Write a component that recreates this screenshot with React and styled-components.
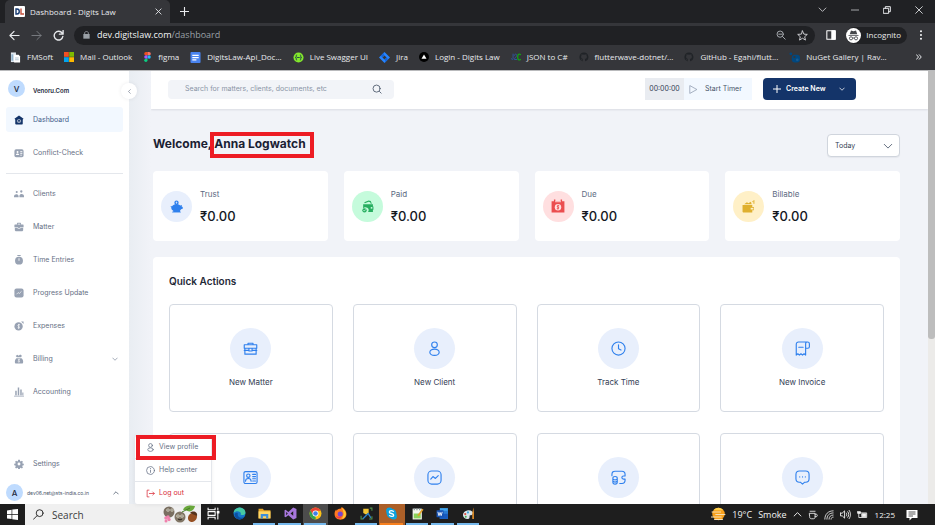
import React from "react";
import styled, { createGlobalStyle, css } from "styled-components";

const ui = `"Open Sans", "Noto Sans", sans-serif`;
const appFont = `Inter, "Liberation Sans", sans-serif`;

const Global = createGlobalStyle`
  *, *::before, *::after { box-sizing: border-box; }
  body { margin: 0; background: #fff; overflow: hidden; }
  button, input, select { font: inherit; color: inherit; border: 0; padding: 0; margin: 0; background: none; }
  a { color: inherit; text-decoration: none; }
  h1, h2, p, ul { margin: 0; padding: 0; }
  ul { list-style: none; }
  svg { display: block; flex: none; }
`;

const Desktop = styled.div`
  display: flex;
  flex-direction: column;
  height: 100vh;
  padding: 0 1px 1px 0;
`;

/* ---------- browser frame ---------- */

const BrowserFrame = styled.header`
  flex: none;
  background: #35363a;
  color: #e8eaed;
  font-family: ${ui};
  font-size: 8px;
  line-height: 12px;
  border-bottom: 1px solid #b9babc;
`;

const TabStrip = styled.div`
  display: flex;
  align-items: center;
  height: 23px;
  background: #202124;
`;

const Tab = styled.div`
  display: flex;
  align-items: center;
  gap: 5px;
  width: 165px;
  height: 23px;
  margin-left: 5px;
  padding: 0 8px 0 9px;
  border-radius: 5px 5px 0 0;
  background: #35363a;
`;

const TabTitle = styled.span`
  flex: 1;
  white-space: nowrap;
`;

const PlainButton = styled.button`
  display: grid;
  place-items: center;
  cursor: pointer;
`;

const NewTab = styled(PlainButton)`
  margin-left: 10px;
`;

const WindowControls = styled.div`
  display: flex;
  align-items: center;
  gap: 24px;
  margin-left: auto;
  padding: 0 12px 4px 0;
`;

const Toolbar = styled.div`
  display: flex;
  align-items: center;
  height: 24px;
  padding: 0 12px 0 9px;
`;

const NavButtons = styled.div`
  display: flex;
  gap: 11px;
  margin-right: 10px;
`;

const AddressBar = styled.div`
  display: flex;
  flex: 1;
  align-items: center;
  height: 19px;
  margin-right: 11px;
  padding: 0 7px 0 9px;
  border-radius: 10px;
  background: #202124;
`;

const Address = styled.a`
  flex: 1;
  margin-left: 7px;
  font-size: 9px;
  color: #9aa0a6;

  b { font-weight: 400; color: #f1f3f4; }
`;

const AddressTools = styled.div`
  display: flex;
  gap: 11px;
`;

const Incognito = styled.div`
  display: flex;
  align-items: center;
  gap: 5px;
  height: 17px;
  margin: 0 12px 0 10px;
  padding-right: 6px;
  border-radius: 9px;
  background: #202124;
`;

const Bookmarks = styled.nav`
  display: flex;
  align-items: center;
  gap: 11px;
  height: 23px;
  padding: 0 13px 3px 10px;
`;

const Bookmark = styled.a`
  display: flex;
  flex: none;
  align-items: center;
  gap: 6px;
  white-space: nowrap;
`;

const MoreBookmarks = styled(PlainButton)`
  margin-left: auto;
`;

/* ---------- application ---------- */

const Page = styled.div`
  position: relative;
  display: flex;
  flex: 1;
  min-height: 0;
  background: #f1f3f8;
  color: #667085;
  font-family: ${appFont};
  font-size: 7px;
  line-height: 12px;
`;

const Sidebar = styled.aside`
  position: relative;
  display: flex;
  flex: none;
  flex-direction: column;
  width: 129px;
  padding: 9px 6px 3px;
  background: #fff;
`;

const Org = styled.div`
  display: flex;
  align-items: flex-end;
  gap: 8px;
  margin-bottom: 10px;
  padding-left: 2px;
  color: #1d2939;
  font-size: 6px;
  font-weight: 600;
`;

const Avatar = styled.span`
  display: grid;
  flex: none;
  place-items: center;
  width: 17px;
  height: 17px;
  border-radius: 50%;
  background: #bfdbfe;
  color: #1e293b;
  font-size: 8px;
  font-weight: 500;
`;

const Collapse = styled(PlainButton)`
  position: absolute;
  top: 12px;
  right: -8px;
  z-index: 2;
  width: 16px;
  height: 16px;
  border-radius: 50%;
  background: #fff;
  box-shadow: 0 0 4px rgba(16, 24, 40, 0.08);
`;

const NavList = styled.ul`
  display: flex;
  flex-direction: column;
  gap: 8px;
`;

const NavLink = styled.a`
  display: flex;
  align-items: center;
  gap: 9px;
  height: 25px;
  padding: 0 5px 0 8px;
  border-radius: 3px;
  color: #667085;

  span { flex: 1; }

  ${({ $active }) => $active && css`
    background: #f2f8ff;
    color: #44608c;
  `}
`;

const Divider = styled.hr`
  width: 100%;
  height: 1px;
  margin: 8px 0 7px;
  border: 0;
  background: #e4e7ec;
`;

const SidebarFoot = styled.div`
  display: flex;
  flex-direction: column;
  gap: 8px;
  margin-top: auto;
`;

const Account = styled.button`
  display: flex;
  align-items: center;
  gap: 4px;
  padding-right: 4px;
  color: #475467;
  font-size: 5px;
  text-align: left;

  span:nth-child(2) { flex: 1; white-space: nowrap; }
`;

const Menu = styled.ul`
  position: absolute;
  bottom: 0;
  left: 134px;
  z-index: 3;
  width: 78px;
  border: 1px solid #e4e7ec;
  border-bottom: 0;
  border-radius: 3px;
  background: #fff;
  box-shadow: 0 1px 4px rgba(16, 24, 40, 0.06);

  li + li { border-top: 1px solid #e4e7ec; }
`;

const marker = css`
  position: relative;

  &::after {
    content: "";
    position: absolute;
    border: 4px solid #ed1c24;
    pointer-events: none;
  }
`;

const MenuItem = styled.button`
  display: flex;
  align-items: center;
  gap: 4px;
  width: 100%;
  height: 22px;
  padding-left: 11px;
  color: ${({ $danger }) => ($danger ? "#d92d3a" : "#667085")};

  ${({ $marked }) => $marked && css`
    ${marker}
    &::after { inset: -1px -5px -2px 1px; }
  `}
`;

const Gutter = styled.div`
  flex: none;
  width: 22px;
  background: linear-gradient(90deg, #e9edf2, #f1f3f8);
`;

const Workspace = styled.div`
  flex: 1;
  min-width: 0;
  overflow: hidden;
`;

const TopBar = styled.div`
  display: flex;
  align-items: center;
  height: 38px;
  padding: 0 72px 2px 17px;
  background: #fff;
  box-shadow: 0 1px 2px rgba(16, 24, 40, 0.1);
`;

const SearchBox = styled.label`
  display: flex;
  flex: 0 1 226px;
  align-items: center;
  height: 19px;
  padding: 0 12px 0 17px;
  border-radius: 4px;
  background: #f2f4f8;

  input { flex: 1; min-width: 0; outline: 0; }
  input::placeholder { color: #8a94a6; opacity: 1; }
`;

const Timer = styled.div`
  display: flex;
  height: 22px;
  margin: 0 11px 0 auto;
  color: #344054;
`;

const Clock = styled.output`
  width: 39px;
  background: #e9ecf1;
  line-height: 22px;
  text-align: center;
`;

const StartTimer = styled.button`
  display: flex;
  align-items: center;
  gap: 7px;
  width: 68px;
  padding-left: 5px;
  background: #f2f8ff;
  color: #475467;
`;

const CreateButton = styled.button`
  display: flex;
  align-items: center;
  gap: 5px;
  width: 93px;
  height: 22px;
  padding: 0 11px 0 10px;
  border-radius: 4px;
  background: #143469;
  color: #fff;
  font-weight: 600;

  svg:last-child { margin-left: auto; }
`;

const Content = styled.main`
  display: flex;
  flex-direction: column;
  padding: 25px 28px 0 2px;
`;

const Heading = styled.div`
  display: flex;
  align-items: center;
  justify-content: space-between;
  height: 23px;
  margin-bottom: 14px;
`;

const Title = styled.h1`
  color: #1a2133;
  font-size: 12px;
  font-weight: 700;
  line-height: 16px;
  padding-bottom: 3px;
`;

const MarkedName = styled.span`
  ${marker}
  display: inline-block;
  &::after { inset: -4px -8px -6px -4px; }
`;

const Period = styled.label`
  display: grid;
  align-items: center;
  width: 73px;
  height: 23px;
  border: 1px solid #d0d5dd;
  border-radius: 4px;
  background: #fff;
  color: #344054;
  box-shadow: 0 1px 1px rgba(16, 24, 40, 0.05);

  select, svg { grid-area: 1 / 1; }
  select { appearance: none; width: 100%; height: 100%; padding-left: 7px; outline: 0; }
  svg { justify-self: end; margin-right: 6px; pointer-events: none; }
`;

const Stats = styled.section`
  display: grid;
  grid-template-columns: repeat(4, 1fr);
  gap: 16px;
  margin-bottom: 16px;
`;

const StatCard = styled.article`
  display: flex;
  align-items: center;
  gap: 8px;
  height: 70px;
  padding-left: 8px;
  border-radius: 4px;
  background: #fff;
`;

const Disc = styled.span`
  display: grid;
  flex: none;
  place-items: center;
  width: ${({ $size }) => $size}px;
  height: ${({ $size }) => $size}px;
  border-radius: 50%;
  background: ${({ $tint }) => $tint};
`;

const StatLabel = styled.p`
  margin-bottom: 8px;
  color: #5d6b82;
  font-size: 8px;
`;

const StatValue = styled.p`
  color: #14181f;
  font-size: 13px;
  font-weight: 500;
  line-height: 16px;
`;

const Panel = styled.section`
  padding: 16px;
  border-radius: 4px;
  background: #fff;
`;

const PanelTitle = styled.h2`
  margin-bottom: 15px;
  color: #1f2937;
  font-size: 10px;
  font-weight: 600;
  line-height: 16px;
`;

const Actions = styled.div`
  display: grid;
  grid-template-columns: repeat(4, 1fr);
  gap: 21px 20px;
`;

const Action = styled.button`
  display: flex;
  flex-direction: column;
  align-items: center;
  gap: 7px;
  padding: 23px 0;
  border: 1px solid #d5dae2;
  border-radius: 4px;
  background: #fff;
  color: #344054;
  font-size: 8px;
  line-height: 12px;
`;

const ScrollTrack = styled.div`
  flex: none;
  width: 7px;
  background: #ecebe9;
`;

const ScrollThumb = styled.div`
  height: 62%;
  border-radius: 0 0 3px 3px;
  background: #bdbdbd;
`;

/* ---------- taskbar ---------- */

const Taskbar = styled.footer`
  display: flex;
  flex: none;
  height: 21px;
  background: #1e1e1e;
  color: #f3f3f3;
  font-family: ${ui};
  font-size: 9px;
  line-height: 12px;
`;

const Start = styled(PlainButton)`
  width: 25px;
`;

const TaskSearch = styled.label`
  display: flex;
  align-items: center;
  width: 176px;
  padding: 0 2px 0 8px;
  background: #f0f0f0;
  color: #333;
  font-size: 10px;

  input { flex: 1; min-width: 0; margin-left: 8px; outline: 0; }
  input::placeholder { color: #3c3c3c; opacity: 1; }
`;

const Apps = styled.div`
  display: grid;
  flex: none;
  grid-template-columns: repeat(11, 1fr);
  width: 280px;
`;

const taskBg = { active: "#4c4c4c", alert: "#ab5f28" };

const TaskApp = styled(PlainButton)`
  border-bottom: 2px solid transparent;
  border-image: linear-gradient(90deg, transparent 3px, ${({ $line }) => $line || "transparent"} 3px 22px, transparent 22px) 2;
  background: ${({ $state }) => taskBg[$state] || "transparent"};
`;

const Tray = styled.div`
  display: flex;
  align-items: center;
  gap: 6px;
  margin-left: auto;
  padding-right: 17px;
`;

const TrayTime = styled.time`
  margin: 0 5px 0 1px;
  font-size: 8px;
`;

/* ---------- icons ---------- */

const Line = ({ size = 9, w = size, box = "0 0 24 24", color = "currentColor", sw = 2, children }) => (
  <svg width={w} height={size} viewBox={box} fill="none" stroke={color} strokeWidth={sw} strokeLinecap="round" strokeLinejoin="round" aria-hidden="true">
    {children}
  </svg>
);

const Solid = ({ size = 10, w = size, box = "0 0 24 24", color = "#98a2b3", children }) => (
  <svg width={w} height={size} viewBox={box} fill={color} aria-hidden="true">{children}</svg>
);

const Chevron = ({ dir = "down", size = 6, sw = 3, color }) => {
  const d = { down: "M3 8l9 9 9-9", up: "M3 16l9-9 9 9", left: "M16 3l-9 9 9 9" }[dir];
  return <Line size={size} sw={sw} color={color}><path d={d} /></Line>;
};

const GitHubMark = () => (
  <Solid size={10} color="#202327">
    <path d="M12 1a11 11 0 0 0-3.5 21.4c.6.1.8-.2.8-.5v-2c-3.1.7-3.8-1.4-3.8-1.4-.5-1.3-1.2-1.6-1.2-1.6-1-.7.1-.7.1-.7 1.1.1 1.700 1.200 1.700 1.200 1 1.700 2.600 1.200 3.200.9.1-.7.4-1.200.7-1.500-2.400-.3-5-1.200-5-5.400 0-1.200.4-2.200 1.100-3-.1-.3-.5-1.400.1-2.900 0 0 .9-.3 3 1.100a10.500 10.500 0 0 1 5.500 0c2.100-1.400 3-1.100 3-1.100.6 1.500.2 2.600.1 2.900.7.8 1.100 1.800 1.100 3 0 4.200-2.600 5.100-5 5.400.4.300.7 1 .7 2v3c0 .3.2.6.8.5A11 11 0 0 0 12 1z" />
  </Solid>
);

const marks = {
  fmsoft: (
    <Solid size={11}><path d="M2 1h11v21H2z" fill="#dfe7ee" /><path d="M9 6h10l3 4v13H9z" fill="#fff" /><path d="M3 5h4v14H3z" fill="#8fb2cc" /><path d="M11 12h8v2h-8zM11 16h8v2h-8z" fill="#b6c6d2" /></Solid>
  ),
  outlook: (
    <Solid size={10}><path d="M0 0h11.500v11.500H0z" fill="#f25022" /><path d="M12.500 0H24v11.500H12.500z" fill="#7fba00" /><path d="M0 12.500h11.500V24H0z" fill="#00a4ef" /><path d="M12.500 12.500H24V24H12.500z" fill="#ffb900" /></Solid>
  ),
  figma: (
    <Solid size={10} w={9} box="0 0 22 24"><path d="M7 0h4v8H7a4 4 0 0 1 0-8z" fill="#f24e1e" /><path d="M11 0h4a4 4 0 0 1 0 8h-4z" fill="#ff7262" /><path d="M7 8h4v8H7a4 4 0 0 1 0-8z" fill="#a259ff" /><circle cx="15" cy="12" r="4" fill="#1abcfe" /><path d="M7 16h4v4a4 4 0 1 1-4-4z" fill="#0acf83" /></Solid>
  ),
  docs: (
    <Solid size={11} w={11} box="0 0 24 24"><rect x="1" width="22" height="24" rx="2" fill="#4a84f0" /><path d="M5 6h14v2.500H5zM5 11h14v2.500H5zM5 16h9v2.500H5z" fill="#fff" /></Solid>
  ),
  swagger: (
    <Solid size={11}><circle cx="12" cy="12" r="11" fill="#84e92c" /><path d="M9 6.500c-2 0-2 1-2 3 0 1.500 0 2.500-1.500 2.500C7 12 7 13 7 14.500c0 2 0 3 2 3M15 6.500c2 0 2 1 2 3 0 1.500 0 2.500 1.500 2.500C17 12 17 13 17 14.500c0 2 0 3-2 3" fill="none" stroke="#173647" strokeWidth="2" /><path d="M8.500 11h2v2h-2zM11.200 11h2v2h-2zM14 11h2v2h-2z" fill="#173647" /></Solid>
  ),
  jira: (
    <Solid size={11}><path d="M12 0l12 12-12 12L0 12z" fill="#2684ff" /><path d="M12 7.500l4.500 4.500-4.500 4.500L7.500 12z" fill="#35363a" /><path d="M12 0c-2.500 3-2.500 5 0 7.500L7.500 12 4 8zM12 24c2.500-3 2.500-5 0-7.500l4.500-4.500L20 16z" fill="#1463d6" /></Solid>
  ),
  login: (
    <Solid size={10}><circle cx="12" cy="12" r="12" fill="#000" /><path d="M12 6l6 10H6z" fill="#fff" /></Solid>
  ),
  json: (
    <Line size={10} box="0 0 24 24" sw={2.400}><path d="M5 5v11c0 3-4 3-4 0" stroke="#31549a" /><path d="M8 8c0-4 6-4 6 0 0 3-6 6-6 10h6" stroke="#31549a" /><path d="M23 6c-5-3-7 1-7 6s2 9 7 6" stroke="#12a412" strokeWidth="3" /></Line>
  ),
  github: <GitHubMark />,
  nuget: (
    <Solid size={11}><circle cx="4" cy="4" r="3" fill="#004880" /><rect x="6" y="6" width="18" height="17" rx="7" fill="#004880" /><circle cx="12" cy="11" r="2.500" fill="#35363a" /><circle cx="18" cy="17" r="3" fill="#17598f" /></Solid>
  ),
};

const navIcons = {
  home: (
    <Solid size={10} color="#143469"><path d="M12 1l11 8-2 2v10c0 1-1 2-2 2H5c-1 0-2-1-2-2V11L1 9z" /><rect x="8" y="11" width="8" height="7" rx="3" fill="none" stroke="#fff" strokeWidth="1.500" /><circle cx="12" cy="15" r="1.200" fill="#fff" /></Solid>
  ),
  idcard: (
    <Solid size={10}><rect x="1" y="3" width="22" height="19" rx="4" /><circle cx="8.500" cy="9.500" r="2.300" fill="#fff" /><path d="M4.500 17c0-5 8-5 8 0zM15 8h5v2h-5zM15 12h5v2h-5zM15 16h4v2h-4z" fill="#fff" /></Solid>
  ),
  people: (
    <Solid size={10}><circle cx="6.500" cy="7" r="2.500" /><circle cx="17.500" cy="6" r="2.800" /><path d="M0 18c0-7 10-7 11-1.500V20H0zM13 20v-4c1-6 11-5 11 1v3z" /></Solid>
  ),
  briefcase: (
    <Solid size={10}><path d="M7 6V4.500C7 3 8 2 9.500 2h5C16 2 17 3 17 4.500V6h4c1.500 0 2 1 2 2v4.500H1V8c0-1 .5-2 2-2zm2 0h6V4H9z" fillRule="evenodd" /><path d="M2 13.500h7V16h6v-2.500h7V20c0 1-1 2-2 2H4c-1 0-2-1-2-2z" /><path d="M10 12h4v3h-4z" /></Solid>
  ),
  stopwatch: (
    <Solid size={10}><path d="M8 0h8v2.500H8z" /><path d="M12 4a9.500 9.500 0 1 1 0 19 9.500 9.500 0 0 1 0-19z" /><path d="M11 8h2v6h-2z" fill="#fff" /></Solid>
  ),
  progress: (
    <Solid size={10}><rect x="1" y="1" width="22" height="22" rx="5" /><path d="M6 15l4-4 3 2 5-5" fill="none" stroke="#fff" strokeWidth="1.600" /></Solid>
  ),
  expenses: (
    <Solid size={10}><circle cx="11" cy="13" r="10" /><path d="M17 1h6v6z" /><path d="M14 9c-4-2-6 2-3 4s2 5-2 3M11.500 7v12" fill="none" stroke="#fff" strokeWidth="1.800" /></Solid>
  ),
  billing: (
    <Solid size={10}><path d="M4 5l4-3 3 2 4-3 4 3-2 4H7z" /><path d="M6 10h12c4 2 6 13 1 13H5c-5 0-3-11 1-13z" /><path d="M14 13c-4-1-5 1-2 3s0 4-3 2M12 11.500v9" fill="none" stroke="#fff" strokeWidth="1.400" /></Solid>
  ),
  bars: (
    <Solid size={10}><path d="M0 21h24v2H0zM3 9h3.500v11H3zM9 1h3.500v19H9zM15 6h3.500v14H15zM20 13h2.500v7H20z" /></Solid>
  ),
  gear: (
    <Solid size={10}><path d="M10 2h4l.6 3 1.700.7 2.600-1.600 2.500 2.600-1.600 2.600.7 1.700 3 .6v3.500l-3 .7-.7 1.700 1.600 2.600-2.500 2.500-2.600-1.600-1.700.7-.6 2.900h-4l-.6-2.900-1.700-.7-2.600 1.600-2.500-2.500 1.600-2.600-.7-1.700-3-.7v-3.500l3-.6.7-1.700-1.600-2.600 2.500-2.600 2.600 1.600L9.400 5zm2 6.500a3.500 3.500 0 1 0 0 7 3.500 3.500 0 0 0 0-7z" fillRule="evenodd" /></Solid>
  ),
};

const UserLine = ({ size, color, sw = 1.700 }) => (
  <Line size={size} color={color} sw={sw}><circle cx="12" cy="6.500" r="5" /><ellipse cx="12" cy="17.700" rx="7.300" ry="4.700" /></Line>
);

const statIcons = {
  trust: (
    <Solid size={13} color="#2f80ed"><path d="M5 10c3-3 11-3 14 0l3-1-.5 3 2 1v3l-3 1-2 3v2H6v-2c-3-2-4-4-3.500-6L1 12l1-1 1.500 1z" /><path d="M4 21.500h16V23H4z" /><circle cx="12" cy="5" r="4" /><path d="M12 3v4M10.500 4.500h3" stroke="#e8effc" strokeWidth="1.200" /></Solid>
  ),
  paid: (
    <Solid size={13} color="#27ae60"><path d="M6 4l8-3 4 1 2 5h-2l-1-3-3-1-7 3z" /><path d="M4 8h18v4h1v6h-1v4h-9a5 5 0 0 0-9-6z" /><path d="M18 13h3v3h-3z" fill="#c5fbdc" /><circle cx="6.500" cy="19" r="4" /><path d="M4.500 19l1.500 1.500 2.500-3" fill="none" stroke="#c5fbdc" strokeWidth="1.500" /></Solid>
  ),
  due: (
    <Solid size={14} color="#eb4d4f"><path d="M1 4h4V1h2.500v3h9V1H19v3h4v19H1z" /><path d="M7 4h10v1.500H7z" fill="#ffdfe0" /><circle cx="12" cy="14" r="5.500" fill="#ffdfe0" /><path d="M14 11.500c-4-1-4 2-2 2.500s2 3-2 2.500M12 10v8" fill="none" stroke="#eb4d4f" strokeWidth="1.600" /></Solid>
  ),
  billable: (
    <Solid size={13} color="#dfb02f"><path d="M2 9h17v4h3v6h-3v4H3c-1 0-2-1-2-2V10c0-1 0-1 1-1z" /><path d="M4 8l5-4 3 2 4-3 2 5z" /><path d="M16 14.500h5v3h-5z" fill="#fff0c7" /><path d="M19 4l3-3v6" fill="none" stroke="#dfb02f" strokeWidth="1.800" /></Solid>
  ),
};

const actionIcons = {
  matter: (
    <><path d="M8 6V3.500h8V6M2 6h20v5.500H2zM3 11.500V21h18v-9.500M2 15h7M15 15h7M9.500 11.500h5V16h-5z" /></>
  ),
  client: <><circle cx="12" cy="6" r="4.500" /><ellipse cx="12" cy="18" rx="7.500" ry="5" /></>,
  time: <><circle cx="12" cy="12" r="10.500" /><path d="M12 6v6.500l4 2" /></>,
  invoice: (
    <><path d="M17 22.500l-2.500-2-2.500 2-2.500-2-2.500 2-2.500-2-2.500 2V5c0-2 1.500-3.500 3.500-3.500H20c2 0 3 1.500 3 3V9c0 1.500-1 2.500-2.500 2.500H17zM17 11.500V4.500c0-2 1.500-3 3-3M6 10h7" /></>
  ),
  contact: (
    <><rect x="1.500" y="2.500" width="21" height="19" rx="2.500" /><circle cx="8.500" cy="9" r="2.700" /><path d="M4 18c0-6 9-6 9 0M15.500 7h4.500M15.500 10.500h4.500M15.500 14h4.500M15.500 17.500h4.500" /></>
  ),
  progress: <><rect x="1.500" y="1.500" width="21" height="21" rx="6" /><path d="M6 14.500l3.500-4 4 3 4.500-4.500" /></>,
  funds: (
    <><path d="M1.500 9V7c0-3.500 1.500-5 5-5h11c3.500 0 5 1.500 5 5v2.500H20c-3.500 0-3.500 5 0 5h2.500v2c0 3-1.500 5-5 5H14" /><path d="M3 13c0-3.500 7-3.500 7 0v6.500c0 4-7 4-7 0zM3 14c2 2.500 5 2.500 7 0M3 17.500c2 2.500 5 2.500 7 0" /></>
  ),
  message: (
    <><path d="M7 1.500h10c3.500 0 5.500 2 5.500 5.500v7c0 3.500-2 5.500-5.500 5.500h-1.500l-3.500 3-3.500-3H7c-3.500 0-5.500-2-5.500-5.500V7c0-3.500 2-5.500 5.500-5.500z" /><path d="M7.500 11h.1M12 11h.1M16.500 11h.1" /></>
  ),
};

const taskIcons = {
  view: <Line size={13} sw={2} color="#fff"><path d="M2 2v3h13V2M2 22v-3h13v3M2 8.500h13v7H2zM20 2v3M20 9v13" /><path d="M19 8h3v3h-3z" fill="#fff" /></Line>,
  edge: <Solid size={13}><circle cx="12" cy="12" r="11" fill="#1476c8" /><path d="M1 11C3-3 22-2 23 10c0 5-6 6-9 4 3-6-8-9-13-3z" fill="#46c9a4" /><path d="M9 12c-2 6 5 11 12 6-5 8-18 6-18-4 0-3 5-5 6-2z" fill="#0c4f9f" /></Solid>,
  folder: <Solid size={13}><path d="M1 3h8l2 3h12v15H1z" fill="#e8a626" /><path d="M1 8h22v13H1z" fill="#ffd766" /><path d="M5 13h14v8h-4v-4H9v4H5z" fill="#3f8fd8" /></Solid>,
  studio: <Solid size={13}><path d="M17 1l6 2.500v17L17 23 8 15l-5 4-2-1V6l2-1 5 4zM17 8l-5 4 5 4zM4 9v6l3-3z" fill="#a877dc" fillRule="evenodd" /></Solid>,
  chrome: <Solid size={13}><circle cx="12" cy="12" r="11" fill="#fbc116" /><path d="M2.500 6.500C7-1.500 18-1 21.500 7H12l-5 8z" fill="#e94235" /><path d="M2.500 6.500L8 15l4 2 .5 6C2 23-1 13 2.500 6.500z" fill="#32a350" /><circle cx="12" cy="12" r="5.500" fill="#fff" /><circle cx="12" cy="12" r="4.200" fill="#3f7fe8" /></Solid>,
  firefox: <Solid size={13}><path d="M12 3c2-1 2-2 2-3 4 2 9 7 9 13 0 14-22 14-22 0 0-4 1-6 3-9v3l2-2c1-1 3-2 6-2z" fill="#ff7a1f" /><path d="M14 1c4 3 8 7 8 12s-3 8-8 9c5-6 5-12 0-21z" fill="#ffcb31" /><circle cx="11.500" cy="13" r="4.700" fill="#7545cf" /><path d="M3 15c3 4 9 4 11 1-1 7-9 7-11-1z" fill="#f2354c" /></Solid>,
  sql: <Solid size={13}><path d="M6 3h10v8l-5 3-5-3z" fill="#f2c533" /><path d="M5 22L15 12l5 8" fill="none" stroke="#2e83ca" strokeWidth="2.500" /><path d="M18 2h4v5M2 16v6h4M22 17v5h-5" fill="none" stroke="#53934c" strokeWidth="2" /></Solid>,
  skype: <Solid size={13}><circle cx="12" cy="12" r="9" fill="#0aa2df" /><circle cx="8" cy="7" r="6" fill="#0aa2df" /><circle cx="16" cy="17" r="6" fill="#0aa2df" /><path d="M16 9c-1-3-8-3-8 0 0 4 8 2 8 6 0 3-7 3-8 0" fill="none" stroke="#fff" strokeWidth="2.500" /></Solid>,
  notes: <Solid size={13}><path d="M3 3h17v20H3z" fill="#f4f6ee" /><path d="M5 12h13v9H5z" fill="#8bd25a" /><path d="M5 2h2v4H5zM10 2h2v4h-2zM15 2h2v4h-2z" fill="#7d8a8d" /><path d="M22 4l-9 12" stroke="#e0a029" strokeWidth="3" /></Solid>,
  word: <Solid size={13}><path d="M7 2h15v20H7z" fill="#41a5ee" /><path d="M7 7h15v5H7z" fill="#2b7cd3" /><path d="M7 12h15v10H7z" fill="#185abd" /><rect x="1" y="6" width="13" height="13" rx="1" fill="#1653b4" /><path d="M3.500 9l2 7 2-6 2 6 2-7" fill="none" stroke="#fff" strokeWidth="1.600" /></Solid>,
  paint: <Solid size={13}><path d="M11 6c8-1 11 5 8 8s-5 0-5 3 0 6-5 5C-1 21-1 8 11 6z" fill="#d8e4ea" /><circle cx="6" cy="13" r="2" fill="#dd4a3d" /><circle cx="11" cy="10" r="2" fill="#3fa9e0" /><circle cx="7" cy="18" r="1.800" fill="#4bae4f" /><path d="M21 1l-2 10v11h3V10z" fill="#e79229" /></Solid>,
};

const SearchArt = () => (
  <svg width="36" height="19" viewBox="0 0 36 19" aria-hidden="true">
    <circle cx="6" cy="7" r="5.500" fill="#796e60" />
    <circle cx="17" cy="12" r="5.500" fill="#807565" />
    <g fill="#f6f1dc"><circle cx="5" cy="5" r="1.600" /><circle cx="9" cy="5" r="1.500" /><circle cx="15" cy="11" r="1.600" /><circle cx="19" cy="11" r="1.600" /></g>
    <g fill="#222"><circle cx="5" cy="5" r=".7" /><circle cx="9" cy="5" r=".7" /><circle cx="15" cy="11" r=".7" /><circle cx="19" cy="11" r=".7" /></g>
    <path d="M15 14c1 1 3 1 4 0" fill="none" stroke="#2a251f" />
    <g fill="#f082ad"><circle cx="3" cy="13" r="1.800" /><circle cx="5" cy="12" r="1.700" /><circle cx="6" cy="14.500" r="1.700" /><circle cx="3" cy="16" r="1.500" /></g>
    <path d="M20 5c2-5 7-5 12-4-1 5-6 7-9 4z" fill="#6aa83b" />
    <path d="M19 7c3-1 5-3 8-4" fill="none" stroke="#467b29" />
    <path d="M26 10c2-3 7-2 8 1 0 4-3 6-6 6-3-1-4-4-2-7z" fill="#965023" />
    <path d="M27 8l7 3c1-4-4-6-7-3z" fill="#55331d" />
  </svg>
);

/* ---------- data ---------- */

const bookmarks = [
  ["fmsoft", "FMSoft"],
  ["outlook", "Mail - Outlook"],
  ["figma", "figma"],
  ["docs", "DigitsLaw-Api_Doc..."],
  ["swagger", "Live Swagger UI"],
  ["jira", "Jira"],
  ["login", "Login - Digits Law"],
  ["json", "JSON to C#"],
  ["github", "flutterwave-dotnet/..."],
  ["github", "GitHub - Egahi/flutt..."],
  ["nuget", "NuGet Gallery | Rav..."],
];

const mainNav = [
  ["home", "Dashboard"],
  ["idcard", "Conflict-Check"],
];

const workNav = [
  ["people", "Clients"],
  ["briefcase", "Matter"],
  ["stopwatch", "Time Entries"],
  ["progress", "Progress Update"],
  ["expenses", "Expenses"],
  ["billing", "Billing"],
  ["bars", "Accounting"],
];

const stats = [
  ["trust", "Trust", "#e8effc"],
  ["paid", "Paid", "#c5fbdc"],
  ["due", "Due", "#ffdfe0"],
  ["billable", "Billable", "#fff0c7"],
];

const actions = [
  ["matter", "New Matter"],
  ["client", "New Client"],
  ["time", "Track Time"],
  ["invoice", "New Invoice"],
  ["contact", ""],
  ["progress", ""],
  ["funds", ""],
  ["message", ""],
];

const actionNames = { contact: "Contacts", progress: "Progress", funds: "Funds", message: "Messages" };

const taskApps = [
  ["view", "Task view"],
  ["edge", "Edge"],
  ["folder", "Explorer", "#76b9ed"],
  ["studio", "Visual Studio", "#76b9ed"],
  ["chrome", "Chrome", "#76b9ed", "active"],
  ["firefox", "Firefox"],
  ["sql", "SQL tools", "#76b9ed"],
  ["skype", "Skype", "#f7801e", "alert"],
  ["notes", "Notepad", "#76b9ed"],
  ["word", "Word", "#76b9ed"],
  ["paint", "Paint", "#76b9ed"],
];

/* ---------- sections ---------- */

function Browser() {
  return (
    <BrowserFrame>
      <TabStrip>
        <Tab>
          <svg width="11" height="11" viewBox="0 0 11 11" aria-hidden="true">
            <rect width="11" height="11" rx="1" fill="#fff" />
            <path d="M2 3v5h1c3 0 3-5 0-5z" fill="none" stroke="#173a70" strokeWidth="1.400" />
            <path d="M7 2.500V8h3" fill="none" stroke="#c4523e" strokeWidth="1.400" />
          </svg>
          <TabTitle>Dashboard - Digits Law</TabTitle>
          <PlainButton aria-label="Close tab"><Line size={7} sw={3}><path d="M3 3l18 18M21 3L3 21" /></Line></PlainButton>
        </Tab>
        <NewTab aria-label="New tab"><Line size={9} sw={3}><path d="M12 1v22M1 12h22" /></Line></NewTab>
        <WindowControls>
          <PlainButton aria-label="Tab search"><Chevron size={9} sw={2} /></PlainButton>
          <PlainButton aria-label="Minimize"><Line size={8} sw={2}><path d="M1 12h22" /></Line></PlainButton>
          <PlainButton aria-label="Restore"><Line size={8} sw={3}><path d="M2 7h15v15H2zM7 7V2h15v15h-5" /></Line></PlainButton>
          <PlainButton aria-label="Close"><Line size={8} sw={2.500}><path d="M2 2l20 20M22 2L2 22" /></Line></PlainButton>
        </WindowControls>
      </TabStrip>
      <Toolbar>
        <NavButtons>
          <PlainButton aria-label="Back"><Line size={11} sw={2.500}><path d="M22 12H2M11 3l-9 9 9 9" /></Line></PlainButton>
          <PlainButton aria-label="Forward"><Line size={11} sw={2} color="#7d8084"><path d="M2 12h20M13 3l9 9-9 9" /></Line></PlainButton>
          <PlainButton aria-label="Reload"><Line size={11} sw={3}><path d="M20 7a9.500 9.500 0 1 0 1.500 7M22 1v8h-8" /></Line></PlainButton>
        </NavButtons>
        <AddressBar>
          <Solid size={8} w={7} box="0 0 21 24" color="#9aa0a6"><path d="M1 9h19v14H1z" /><path d="M5 9V6c0-6 11-6 11 0v3" fill="none" stroke="#9aa0a6" strokeWidth="2.500" /></Solid>
          <Address href="#"><b>dev.digitslaw.com</b>/dashboard</Address>
          <AddressTools>
            <PlainButton aria-label="Zoom"><Line size={10} color="#bdc1c6"><circle cx="10" cy="10" r="7.500" /><path d="M16 16l6 6M6.500 10h7" /></Line></PlainButton>
            <PlainButton aria-label="Bookmark this page"><Line size={11} color="#d5d7da"><path d="M12 2l3 7 7.500.6-5.700 5 1.700 7.400-6.500-4-6.500 4 1.700-7.400-5.700-5L9 9z" /></Line></PlainButton>
          </AddressTools>
        </AddressBar>
        <PlainButton aria-label="Side panel"><Line size={10} sw={2.500} color="#fff"><path d="M2 2h20v20H2z" /><path d="M14 2h8v20h-8z" fill="#fff" /></Line></PlainButton>
        <Incognito>
          <Solid size={15}><circle cx="12" cy="12" r="12" fill="#fff" /><path d="M8 4l4 1 4-1 2 6H6zM4 11h16v1.500H4z" fill="#45474b" /><g fill="none" stroke="#45474b" strokeWidth="1.400"><circle cx="8" cy="16.500" r="2.500" /><circle cx="16" cy="16.500" r="2.500" /><path d="M10.500 16h3" /></g></Solid>
          Incognito
        </Incognito>
        <PlainButton aria-label="Menu"><Solid size={10} w={4} box="0 0 8 24" color="#f1f3f4"><circle cx="4" cy="3" r="2.500" /><circle cx="4" cy="12" r="2.500" /><circle cx="4" cy="21" r="2.500" /></Solid></PlainButton>
      </Toolbar>
      <Bookmarks aria-label="Bookmarks">
        {bookmarks.map(([icon, label]) => (
          <Bookmark href="#" key={label}>{marks[icon]}{label}</Bookmark>
        ))}
        <MoreBookmarks aria-label="More bookmarks"><Line size={6} sw={4}><path d="M2 3l8 9-8 9M13 3l8 9-8 9" /></Line></MoreBookmarks>
      </Bookmarks>
    </BrowserFrame>
  );
}

function Item({ icon, label, active }) {
  return (
    <li>
      <NavLink href="#" $active={active}>
        {navIcons[icon]}
        <span>{label}</span>
        {icon === "billing" && <Chevron size={6} color="#8590a2" />}
      </NavLink>
    </li>
  );
}

function SideNav() {
  return (
    <Sidebar>
      <Org><Avatar>V</Avatar>Venoru.Com</Org>
      <Collapse aria-label="Collapse sidebar"><Chevron dir="left" size={5} sw={3} /></Collapse>
      <NavList>
        {mainNav.map(([icon, label], i) => <Item key={label} icon={icon} label={label} active={i === 0} />)}
      </NavList>
      <Divider />
      <NavList>
        {workNav.map(([icon, label]) => <Item key={label} icon={icon} label={label} />)}
      </NavList>
      <SidebarFoot>
        <NavLink href="#">{navIcons.gear}<span>Settings</span></NavLink>
        <Account aria-expanded="true">
          <Avatar>A</Avatar>
          <span>dev06.net@sts-india.co.in</span>
          <Chevron dir="up" size={6} />
        </Account>
      </SidebarFoot>
      <Menu>
        <li><MenuItem $marked><UserLine size={9} sw={2} />View profile</MenuItem></li>
        <li><MenuItem><Line size={9} sw={2}><circle cx="12" cy="12" r="10.500" /><path d="M12 11v6M12 6.500v.5" /></Line>Help center</MenuItem></li>
        <li><MenuItem $danger><Line size={9} sw={2}><path d="M8 3H3v18h5M9 12h13M18 8l4 4-4 4" /></Line>Log out</MenuItem></li>
      </Menu>
    </Sidebar>
  );
}

function Dashboard() {
  return (
    <Workspace>
      <TopBar>
        <SearchBox>
          <input type="search" aria-label="Search" placeholder="Search for matters, clients, documents, etc" />
          <Line size={10} color="#475467"><circle cx="11" cy="11" r="8.500" /><path d="M18 18l4 4" /></Line>
        </SearchBox>
        <Timer>
          <Clock>00:00:00</Clock>
          <StartTimer><Line size={9} sw={2} color="#8d99ae"><path d="M3 2l18 10L3 22z" /></Line>Start Timer</StartTimer>
        </Timer>
        <CreateButton><Line size={8} sw={3}><path d="M12 1v22M1 12h22" /></Line>Create New<Chevron size={6} /></CreateButton>
      </TopBar>
      <Content>
        <Heading>
          <Title>Welcome, <MarkedName>Anna Logwatch</MarkedName></Title>
          <Period>
            <select aria-label="Period" defaultValue="Today"><option>Today</option></select>
            <Chevron size={10} sw={2} color="#475467" />
          </Period>
        </Heading>
        <Stats>
          {stats.map(([icon, label, tint]) => (
            <StatCard key={icon}>
              <Disc $size={31} $tint={tint}>{statIcons[icon]}</Disc>
              <div>
                <StatLabel>{label}</StatLabel>
                <StatValue>₹0.00</StatValue>
              </div>
            </StatCard>
          ))}
        </Stats>
        <Panel>
          <PanelTitle>Quick Actions</PanelTitle>
          <Actions>
            {actions.map(([icon, label]) => (
              <Action key={icon} aria-label={label || actionNames[icon]}>
                <Disc $size={41} $tint="#e8effc"><Line size={15} sw={1.800} color="#2f80ed">{actionIcons[icon]}</Line></Disc>
                {label}
              </Action>
            ))}
          </Actions>
        </Panel>
      </Content>
    </Workspace>
  );
}

function SystemBar() {
  return (
    <Taskbar>
      <Start aria-label="Start"><Solid size={11} color="#fff"><path d="M0 3l10-1.500V11H0zM11.500 1.300L24 0v11H11.500zM0 12.500h10v9.500L0 20.500zM11.500 12.500H24V24l-12.500-1.500z" /></Solid></Start>
      <TaskSearch>
        <Line size={11} color="#222"><circle cx="14.500" cy="9" r="7.500" /><path d="M9 14.500l-8 8" /></Line>
        <input type="search" aria-label="Search Windows" placeholder="Search" />
        <SearchArt />
      </TaskSearch>
      <Apps>
        {taskApps.map(([icon, name, line, state]) => (
          <TaskApp key={icon} aria-label={name} $line={line} $state={state}>{taskIcons[icon]}</TaskApp>
        ))}
      </Apps>
      <Tray>
        <Solid size={15}><circle cx="12" cy="11" r="10" fill="#f7a01c" /><path d="M4 5c5-6 13-4 15 0" fill="#ffd04a" /><path d="M1 8h15M7 12h16M0 16h17M5 20h14" stroke="#f7dfb2" strokeWidth="1.600" /></Solid>
        <span>19°C</span>
        <span>Smoke</span>
        <Chevron dir="up" size={9} sw={2.500} />
        <Line size={10} sw={2}><path d="M4 8h13v9c0 3-2 4-4 4H8c-2 0-4-1-4-4zM17 10h3c3 0 3 6 0 6h-3M5 3h12" /></Line>
        <Line size={10} sw={2}><path d="M2 22C2 10 10 2 22 2M7 22C7 13 13 7 22 7M12 22c0-6 4-10 10-10M17 22c0-3 2-5 5-5" /></Line>
        <Line size={11} sw={2}><path d="M1 9v6h4l5 5V4L5 9zM14 9c1 2 1 4 0 6M17 6c3 4 3 8 0 12M20 3c4 6 4 12 0 18" /></Line>
        <Line size={10} w={11} box="0 0 26 24" sw={2}><path d="M5 7h18v11H5z" /><path d="M12 9h9v7h-9z" fill="currentColor" /><path d="M1 4h7v4H2z" fill="currentColor" /></Line>
        <TrayTime>12:25</TrayTime>
        <Solid size={12} color="#fff"><path d="M1 2h22v16H12l-5 5v-5H1z" /><path d="M5 6h14M5 10h14M5 14h9" stroke="#1e1e1e" strokeWidth="1.500" /></Solid>
      </Tray>
    </Taskbar>
  );
}

export default function App() {
  return (
    <Desktop>
      <Global />
      <Browser />
      <Page>
        <SideNav />
        <Gutter />
        <Dashboard />
        <ScrollTrack><ScrollThumb /></ScrollTrack>
      </Page>
      <SystemBar />
    </Desktop>
  );
}
